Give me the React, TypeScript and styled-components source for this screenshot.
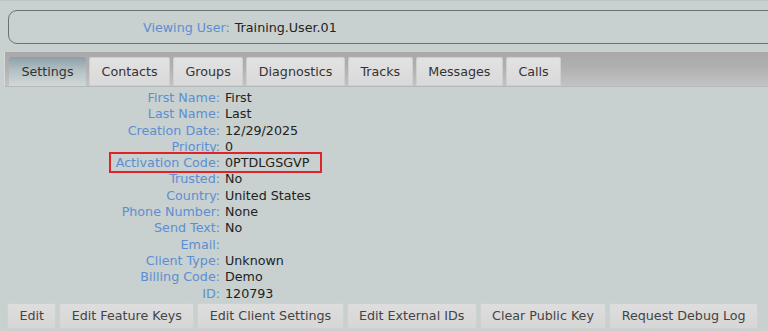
import React from 'react';
import styled, { createGlobalStyle } from 'styled-components';

const GlobalStyle = createGlobalStyle`
    html, body {
        margin: 0;
        padding: 0;
        background: #c8d0d0;
        overflow: hidden;
    }
    body {
        font-family: 'DejaVu Sans', Verdana, sans-serif;
        font-size: 12.7px;
        color: #222;
    }
`;

const Page = styled.div`
    width: 768px;
    height: 331px;
    overflow: hidden;
    border-top: 1px solid #bcc4c4;
    box-sizing: border-box;
`;

const Header = styled.div`
    margin: 9px -20px 0 8px;
    height: 32px;
    border: 1px solid #6a7272;
    border-radius: 9px;
    display: flex;
    align-items: center;
    padding-left: 134px;
    gap: 5px;
`;

const Label = styled.span`
    color: #5b8fd2;
`;

const Value = styled.span`
    color: #222;
`;

const TabBar = styled.div`
    margin: 8px 0 0 4px;
    height: 34px;
    display: flex;
    align-items: flex-end;
    gap: 3px;
    padding-left: 4px;
    background: linear-gradient(to bottom, #a9a9a9 0%, #b0b0b0 45%, #c3c3c3 100%);
    border-left: 1px solid #d4d8d8;
    border-bottom: 1px solid #b2b9b9;
`;

const Tab = styled.div<{ $active?: boolean }>`
    height: 29px;
    padding: 0 12.5px;
    display: flex;
    align-items: center;
    border-radius: 3px 3px 0 0;
    color: #333;
    background: ${p => p.$active
        ? 'linear-gradient(to bottom, #8c9ea8 0%, #b2c0c4 45%, #d2d8d8 100%)'
        : 'linear-gradient(to bottom, #e2e2e2 0%, #d9d9d9 100%)'};
    box-shadow: ${p => p.$active ? 'none' : 'inset 0 0 0 1px #cfcfcf'};
`;

const Details = styled.div`
    padding-top: 3px;
`;

const Row = styled.div<{ $highlight?: boolean }>`
    position: relative;
    display: flex;
    gap: 5px;
    line-height: 16.3px;

    &::before {
        content: '';
        display: ${p => p.$highlight ? 'block' : 'none'};
        position: absolute;
        left: 109px;
        top: -3px;
        width: 209px;
        height: 17px;
        border: 2px solid #e0222a;
    }
`;

const RowLabel = styled.span`
    width: 220px;
    text-align: right;
    color: #5b8fd2;
`;

const Actions = styled.div`
    display: flex;
    gap: 3px;
    padding: 1px 0 0 7px;
`;

const Button = styled.div`
    height: 26px;
    padding: 0 12.4px;
    display: flex;
    align-items: center;
    border-radius: 3px;
    color: #444;
    white-space: nowrap;
    background: linear-gradient(to bottom, #dedede 0%, #d6d6d6 100%);
    box-shadow: inset 0 0 0 1px #cfd1d1;
`;

const tabs = ['Settings', 'Contacts', 'Groups', 'Diagnostics', 'Tracks', 'Messages', 'Calls'];

const fields: { label: string; value: string; highlight?: boolean }[] = [
    { label: 'First Name', value: 'First' },
    { label: 'Last Name', value: 'Last' },
    { label: 'Creation Date', value: '12/29/2025' },
    { label: 'Priority', value: '0' },
    { label: 'Activation Code', value: '0PTDLGSGVP', highlight: true },
    { label: 'Trusted', value: 'No' },
    { label: 'Country', value: 'United States' },
    { label: 'Phone Number', value: 'None' },
    { label: 'Send Text', value: 'No' },
    { label: 'Email', value: '' },
    { label: 'Client Type', value: 'Unknown' },
    { label: 'Billing Code', value: 'Demo' },
    { label: 'ID', value: '120793' },
];

const actions = ['Edit', 'Edit Feature Keys', 'Edit Client Settings', 'Edit External IDs', 'Clear Public Key', 'Request Debug Log'];

const App: React.FC = () => {
    return (
        <Page>
            <GlobalStyle />
            <Header>
                <Label>Viewing User:</Label>
                <Value>Training.User.01</Value>
            </Header>
            <TabBar>
                {tabs.map((tab, index) => (
                    <Tab key={tab} $active={index === 0}>{tab}</Tab>
                ))}
            </TabBar>
            <Details>
                {fields.map(field => (
                    <Row key={field.label} $highlight={field.highlight}>
                        <RowLabel>{field.label}:</RowLabel>
                        <Value>{field.value}</Value>
                    </Row>
                ))}
            </Details>
            <Actions>
                {actions.map(action => (
                    <Button key={action}>{action}</Button>
                ))}
            </Actions>
        </Page>
    );
};

export default App;
